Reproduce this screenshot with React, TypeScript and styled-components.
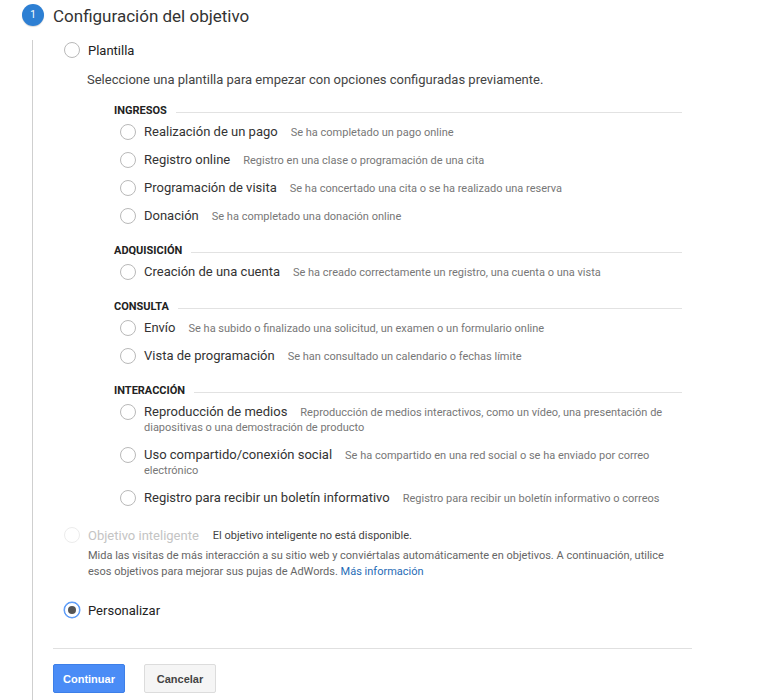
import React from 'react';
import styled, { createGlobalStyle } from 'styled-components';

const GlobalStyle = createGlobalStyle`
  body {
    margin: 0;
    background: #fff;
    font-family: Roboto, "Liberation Sans", Arial, sans-serif;
    color: #333;
  }
`;

const Page = styled.div`
  width: 765px;
  height: 700px;
  overflow: hidden;
`;

const StepHeader = styled.div`
  display: flex;
  align-items: center;
  padding-top: 4px;
  height: 22px;
`;

const StepNumber = styled.div`
  width: 22px;
  height: 22px;
  margin-left: 22px;
  border-radius: 50%;
  background: #2d7fd3;
  color: #fff;
  font-size: 10px;
  line-height: 22px;
  text-align: center;
  box-shadow: 0 1px 1px rgba(0, 0, 0, 0.15);
`;

const StepTitle = styled.h2`
  margin: 0 0 0 9px;
  font-size: 17px;
  font-weight: 400;
  color: #333;
  line-height: 22px;
  position: relative;
  top: 1px;
`;

const StepBody = styled.div`
  margin-left: 32px;
  border-left: 1px solid #cfcfcf;
  padding-left: 20px;
  width: 639px;
  min-height: 674px;
`;

const Radio = styled.span<{ $checked?: boolean; $disabled?: boolean }>`
  flex: none;
  position: relative;
  box-sizing: border-box;
  width: 16px;
  height: 16px;
  border-radius: 50%;
  background: #fff;
  border: 1px solid
    ${(p) => (p.$checked ? '#5b9bf8' : p.$disabled ? '#ececec' : '#b9b9b9')};
  box-shadow: ${(p) => (p.$checked ? '0 0 0 0.5px #5b9bf8' : 'none')};

  &::after {
    content: '';
    display: ${(p) => (p.$checked ? 'block' : 'none')};
    position: absolute;
    left: 3px;
    top: 3px;
    width: 8px;
    height: 8px;
    border-radius: 50%;
    background: #555;
  }
`;

const MainOption = styled.label<{ $top: number }>`
  display: flex;
  align-items: center;
  gap: 8px;
  margin-top: ${(p) => p.$top}px;
  padding-left: 11px;
  height: 20px;
`;

const MainLabel = styled.span<{ $disabled?: boolean }>`
  font-size: 13px;
  color: ${(p) => (p.$disabled ? '#c4c4c4' : '#222')};
`;

const Unavailable = styled.span`
  font-size: 11px;
  color: #444;
  margin-left: 6px;
`;

const Intro = styled.p`
  margin: 11px 0 15px 34px;
  font-size: 13px;
  line-height: 18px;
  color: #444;
`;

const Group = styled.div`
  margin: 0 10px 14px 61px;
`;

const GroupHeader = styled.div`
  display: flex;
  align-items: center;
  font-size: 11px;
  font-weight: 700;
  line-height: 14px;
  color: #222;
  text-transform: uppercase;
  margin-top: 1px;

  &::after {
    content: '';
    flex: 1;
    height: 1px;
    margin-left: 9px;
    margin-top: 3px;
    background: #e2e2e2;
  }
`;

const Option = styled.label`
  display: flex;
  align-items: flex-start;
  gap: 8px;
  padding: 6px 0 6px 6px;
`;

const OptionText = styled.span`
  display: block;
  font-size: 11px;
  line-height: 15px;
`;

const OptionLabel = styled.span`
  font-size: 13px;
  color: #333;
  margin-right: 13px;
`;

const OptionDesc = styled.span`
  color: #777;
`;

const SmartText = styled.p`
  margin: 3px 0 0 35px;
  font-size: 11px;
  line-height: 16px;
  color: #666;
  width: 590px;
`;

const Link = styled.a`
  color: #1f6cb6;
  text-decoration: none;
`;

const Divider = styled.hr`
  margin: 28px 0 0;
  border: 0;
  border-top: 1px solid #e0e0e0;
`;

const Actions = styled.div`
  display: flex;
  gap: 19px;
  margin-top: 15px;
`;

const Button = styled.button<{ $primary?: boolean }>`
  min-width: 72px;
  height: 29px;
  padding: 0 8px;
  border-radius: 2px;
  font-family: "Liberation Sans", Arial, sans-serif;
  font-size: 11px;
  font-weight: 700;
  cursor: pointer;
  color: ${(p) => (p.$primary ? '#fff' : '#444')};
  background: ${(p) => (p.$primary ? '#4a8cf6' : '#f5f5f5')};
  border: 1px solid ${(p) => (p.$primary ? '#3d7fe8' : '#dcdcdc')};
`;

type Item = { label: string; desc: string };
type Section = { title: string; items: Item[] };

const sections: Section[] = [
  {
    title: 'Ingresos',
    items: [
      { label: 'Realización de un pago', desc: 'Se ha completado un pago online' },
      { label: 'Registro online', desc: 'Registro en una clase o programación de una cita' },
      { label: 'Programación de visita', desc: 'Se ha concertado una cita o se ha realizado una reserva' },
      { label: 'Donación', desc: 'Se ha completado una donación online' },
    ],
  },
  {
    title: 'Adquisición',
    items: [
      { label: 'Creación de una cuenta', desc: 'Se ha creado correctamente un registro, una cuenta o una vista' },
    ],
  },
  {
    title: 'Consulta',
    items: [
      { label: 'Envío', desc: 'Se ha subido o finalizado una solicitud, un examen o un formulario online' },
      { label: 'Vista de programación', desc: 'Se han consultado un calendario o fechas límite' },
    ],
  },
  {
    title: 'Interacción',
    items: [
      {
        label: 'Reproducción de medios',
        desc: 'Reproducción de medios interactivos, como un vídeo, una presentación de diapositivas o una demostración de producto',
      },
      {
        label: 'Uso compartido/conexión social',
        desc: 'Se ha compartido en una red social o se ha enviado por correo electrónico',
      },
      {
        label: 'Registro para recibir un boletín informativo',
        desc: 'Registro para recibir un boletín informativo o correos',
      },
    ],
  },
];

const App: React.FC = () => {
  return (
    <Page>
      <GlobalStyle />
      <StepHeader>
        <StepNumber>1</StepNumber>
        <StepTitle>Configuración del objetivo</StepTitle>
      </StepHeader>
      <StepBody>
        <MainOption $top={14}>
          <Radio />
          <MainLabel>Plantilla</MainLabel>
        </MainOption>
        <Intro>Seleccione una plantilla para empezar con opciones configuradas previamente.</Intro>

        {sections.map((section) => (
          <Group key={section.title}>
            <GroupHeader>{section.title}</GroupHeader>
            {section.items.map((item) => (
              <Option key={item.label}>
                <Radio />
                <OptionText>
                  <OptionLabel>{item.label}</OptionLabel>
                  <OptionDesc>{item.desc}</OptionDesc>
                </OptionText>
              </Option>
            ))}
          </Group>
        ))}

        <MainOption $top={-1}>
          <Radio $disabled />
          <MainLabel $disabled>Objetivo inteligente</MainLabel>
          <Unavailable>El objetivo inteligente no está disponible.</Unavailable>
        </MainOption>
        <SmartText>
          Mida las visitas de más interacción a su sitio web y conviértalas automáticamente en objetivos. A
          continuación, utilice esos objetivos para mejorar sus pujas de AdWords.{' '}
          <Link href="#">Más información</Link>
        </SmartText>

        <MainOption $top={20}>
          <Radio $checked />
          <MainLabel>Personalizar</MainLabel>
        </MainOption>

        <Divider />
        <Actions>
          <Button $primary>Continuar</Button>
          <Button>Cancelar</Button>
        </Actions>
      </StepBody>
    </Page>
  );
};

export default App;
